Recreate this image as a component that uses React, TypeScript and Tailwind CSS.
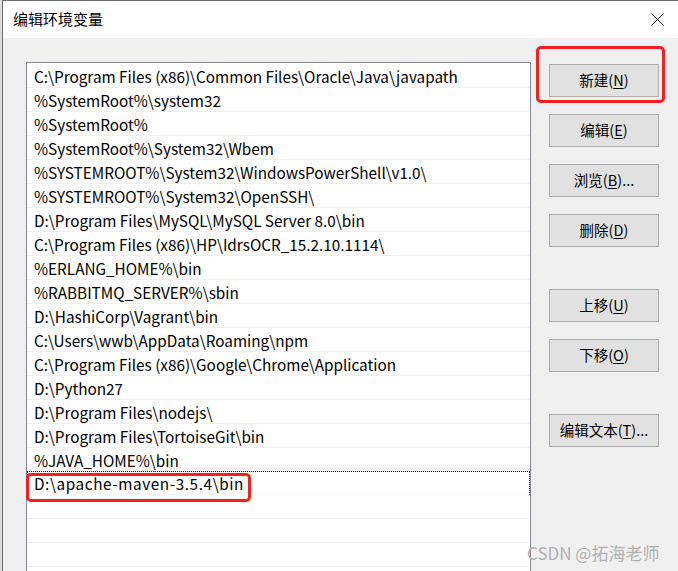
import React from 'react';

const paths = [
  'C:\\Program Files (x86)\\Common Files\\Oracle\\Java\\javapath',
  '%SystemRoot%\\system32',
  '%SystemRoot%',
  '%SystemRoot%\\System32\\Wbem',
  '%SYSTEMROOT%\\System32\\WindowsPowerShell\\v1.0\\',
  '%SYSTEMROOT%\\System32\\OpenSSH\\',
  'D:\\Program Files\\MySQL\\MySQL Server 8.0\\bin',
  'C:\\Program Files (x86)\\HP\\IdrsOCR_15.2.10.1114\\',
  '%ERLANG_HOME%\\bin',
  '%RABBITMQ_SERVER%\\sbin',
  'D:\\HashiCorp\\Vagrant\\bin',
  'C:\\Users\\wwb\\AppData\\Roaming\\npm',
  'C:\\Program Files (x86)\\Google\\Chrome\\Application',
  'D:\\Python27',
  'D:\\Program Files\\nodejs\\',
  'D:\\Program Files\\TortoiseGit\\bin',
  '%JAVA_HOME%\\bin',
];

const font = { fontFamily: '"Noto Sans CJK SC", "Noto Sans", sans-serif' };

const Btn = ({ label, k, tail = '', className = '' }: { label: string; k: string; tail?: string; className?: string }) => (
  <button
    className={`w-[110px] h-[33px] bg-[#e1e1e1] border border-[#adadad] text-[14.5px] text-black flex items-center justify-center leading-none ${className}`}
  >
    {label}(<span className="underline underline-offset-2">{k}</span>){tail}
  </button>
);

export default function App() {
  return (
    <div className="relative w-[678px] h-[571px] overflow-hidden flex bg-[#f0f0f0]" style={font}>
      {/* window behind */}
      <div className="w-[2px] h-full bg-[#dcdcdc] shrink-0" />
      <div className="flex-1 flex flex-col border-l border-t border-[#6b6b6b]">
        {/* title bar */}
        <div className="h-[37px] shrink-0 bg-white flex items-center justify-between pl-[10px] pr-[14px]">
          <span className="text-[15px] text-black">编辑环境变量</span>
          <svg width="13" height="13" viewBox="0 0 13 13" className="mb-[1px]">
            <path d="M0.5 0.5 L12.5 12.5 M12.5 0.5 L0.5 12.5" stroke="#111" strokeWidth="1" />
          </svg>
        </div>

        {/* body */}
        <div className="flex-1 flex pl-[23px] pt-[24px]">
          <div className="w-[505px] h-[560px] bg-white border border-[#828790] pt-[1px] shrink-0">
            {paths.map((p) => (
              <div
                key={p}
                className="h-[24px] border-b border-[#f0f0f0] pl-[7px] pt-[1px] text-[15.3px] text-black flex items-center whitespace-nowrap"
              >
                {p}
              </div>
            ))}
            <div className="h-[24px] border-t border-l border-r border-dotted border-t-black border-l-black border-r-black border-b border-b-[#f0f0f0] pl-[6px] pt-[1px] text-[15.3px] tracking-[0.6px] text-black flex items-center -mt-[1px]">
              D:\apache-maven-3.5.4\bin
            </div>
            <div className="h-[24px] border-b border-[#f0f0f0]" />
            <div className="h-[24px] border-b border-[#f0f0f0]" />
            <div className="h-[24px] border-b border-[#f0f0f0]" />
            <div className="h-[24px] border-b border-[#f0f0f0]" />
          </div>

          <div className="ml-[18px] mt-[2px] flex flex-col">
            <Btn label="新建" k="N" />
            <Btn label="编辑" k="E" className="mt-[17px]" />
            <Btn label="浏览" k="B" tail="..." className="mt-[17px]" />
            <Btn label="删除" k="D" className="mt-[17px]" />
            <Btn label="上移" k="U" className="mt-[42px]" />
            <Btn label="下移" k="O" className="mt-[17px]" />
            <Btn label="编辑文本" k="T" tail="..." className="mt-[42px]" />
          </div>
        </div>
      </div>

      {/* red annotation boxes */}
      <div className="absolute left-[536px] top-[46px] w-[129px] h-[57px] border-[3px] border-[#f5201e] rounded-[5px]" />
      <div className="absolute left-[26px] top-[473px] w-[225px] h-[29px] border-[3px] border-[#f5201e] rounded-[5px]" />

      {/* watermark */}
      <div className="absolute left-[527px] top-[540px] text-[17px] text-[#b0b0b0] whitespace-nowrap">
        CSDN @拓海老师
      </div>
    </div>
  );
}
